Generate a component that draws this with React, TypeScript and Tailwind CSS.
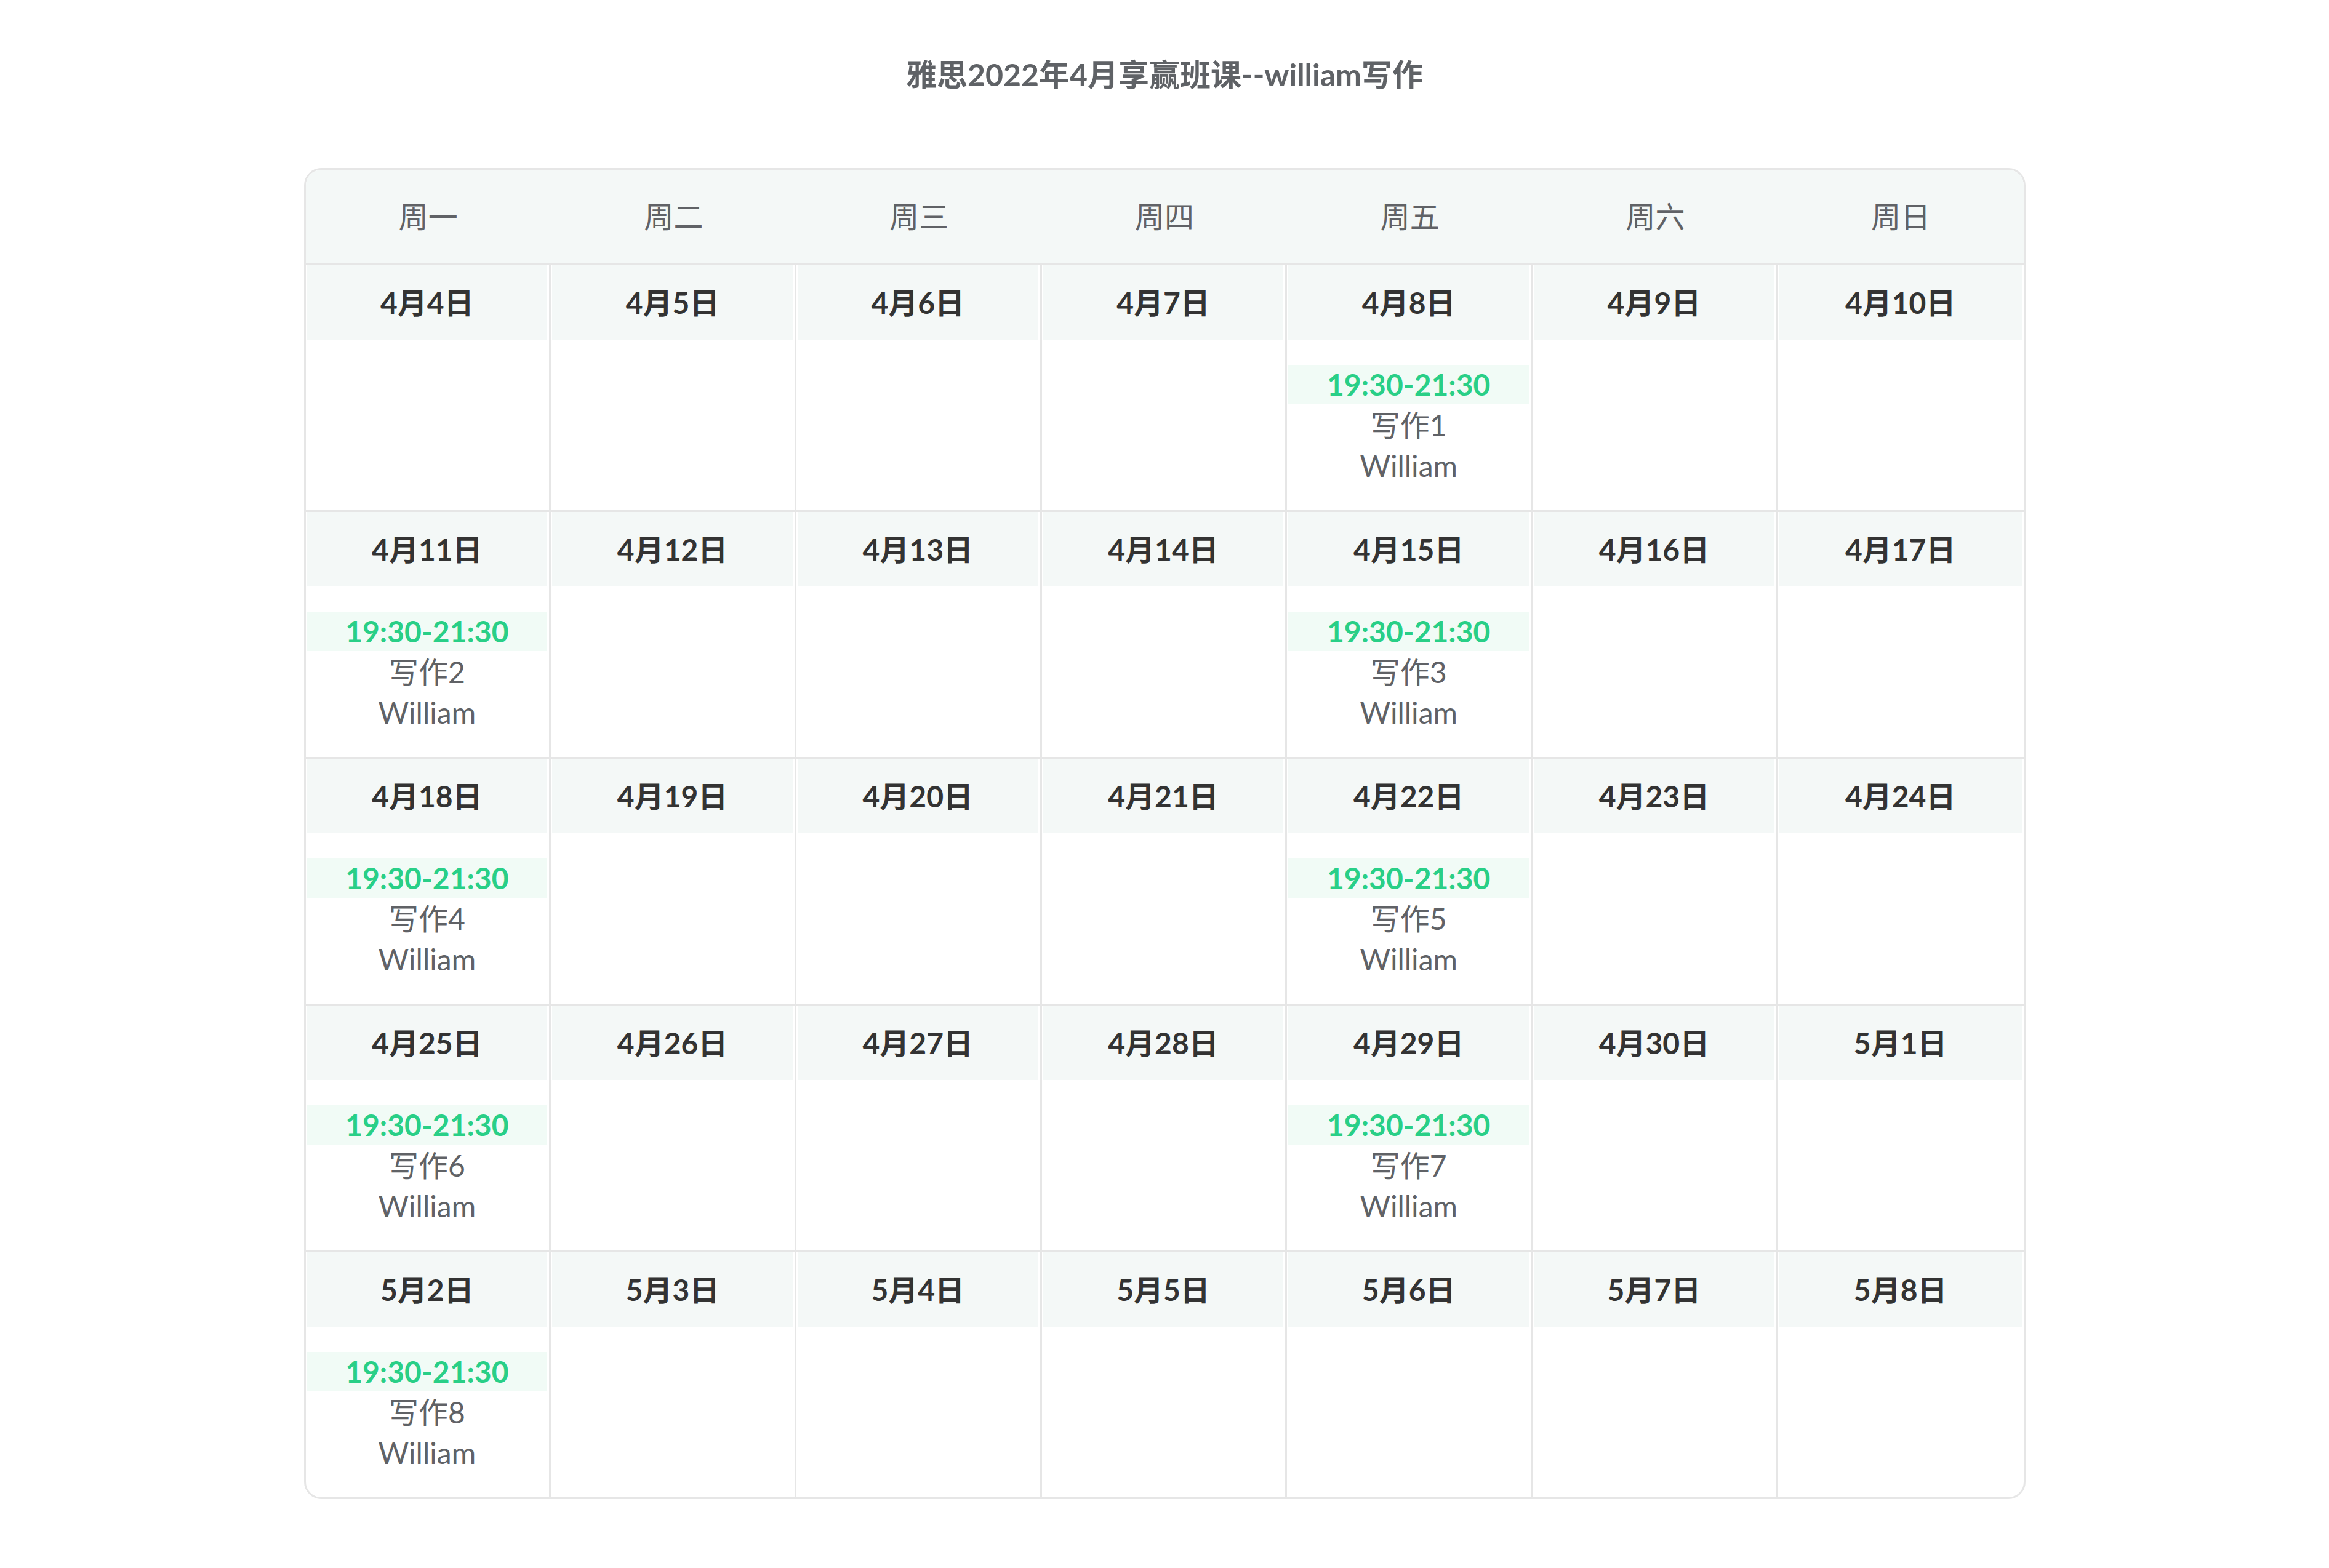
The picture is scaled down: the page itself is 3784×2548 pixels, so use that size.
import React from "react";

const weekdays = ["周一", "周二", "周三", "周四", "周五", "周六", "周日"];

type Day = { label: string; lesson?: number };

const weeks: Day[][] = [
  [
    { label: "4月4日" },
    { label: "4月5日" },
    { label: "4月6日" },
    { label: "4月7日" },
    { label: "4月8日", lesson: 1 },
    { label: "4月9日" },
    { label: "4月10日" },
  ],
  [
    { label: "4月11日", lesson: 2 },
    { label: "4月12日" },
    { label: "4月13日" },
    { label: "4月14日" },
    { label: "4月15日", lesson: 3 },
    { label: "4月16日" },
    { label: "4月17日" },
  ],
  [
    { label: "4月18日", lesson: 4 },
    { label: "4月19日" },
    { label: "4月20日" },
    { label: "4月21日" },
    { label: "4月22日", lesson: 5 },
    { label: "4月23日" },
    { label: "4月24日" },
  ],
  [
    { label: "4月25日", lesson: 6 },
    { label: "4月26日" },
    { label: "4月27日" },
    { label: "4月28日" },
    { label: "4月29日", lesson: 7 },
    { label: "4月30日" },
    { label: "5月1日" },
  ],
  [
    { label: "5月2日", lesson: 8 },
    { label: "5月3日" },
    { label: "5月4日" },
    { label: "5月5日" },
    { label: "5月6日" },
    { label: "5月7日" },
    { label: "5月8日" },
  ],
];

const font = {
  fontFamily: 'Lato, "Noto Sans CJK SC", "Noto Sans", sans-serif',
};

export default function App() {
  return (
    <div className="min-h-screen bg-white pt-[88px]" style={font}>
      <h1 className="text-center text-[50px] font-bold leading-[66px] text-[#5f6266]">
        雅思2022年4月享赢班课--william写作
      </h1>
      <div className="mx-auto mt-[119px] w-[2797px] overflow-hidden rounded-[28px] border-[3px] border-[#e6e6e6]">
        <div className="grid h-[152px] grid-cols-7 bg-[#f4f8f7]">
          {weekdays.map((w) => (
            <div
              key={w}
              className="flex items-center justify-center text-[48px] text-[#606266]"
            >
              {w}
            </div>
          ))}
        </div>
        {weeks.map((week, wi) => (
          <div key={wi} className="grid grid-cols-7 border-t-[3px] border-[#e6e6e6]">
            {week.map((d, di) => (
              <div
                key={d.label}
                className={
                  di < 6
                    ? "border-r-[3px] border-[#e6e6e6] pl-[2px] pr-[3px]"
                    : "pl-[2px] pr-[3px]"
                }
              >
                <div className="flex h-[121px] items-center justify-center bg-[#f4f8f7] text-[48px] font-bold text-[#333333]">
                  {d.label}
                </div>
                <div className="h-[277px] pt-[41px] text-center">
                  {d.lesson !== undefined && (
                    <>
                      <div className="h-[64px] bg-[#f1fbf6] text-[48px] font-bold leading-[64px] text-[#29cf87]">
                        19:30-21:30
                      </div>
                      <div className="text-[48px] leading-[67px] text-[#606266]">
                        写作{d.lesson}
                      </div>
                      <div className="text-[48px] leading-[66px] text-[#606266]">
                        William
                      </div>
                    </>
                  )}
                </div>
              </div>
            ))}
          </div>
        ))}
      </div>
    </div>
  );
}
